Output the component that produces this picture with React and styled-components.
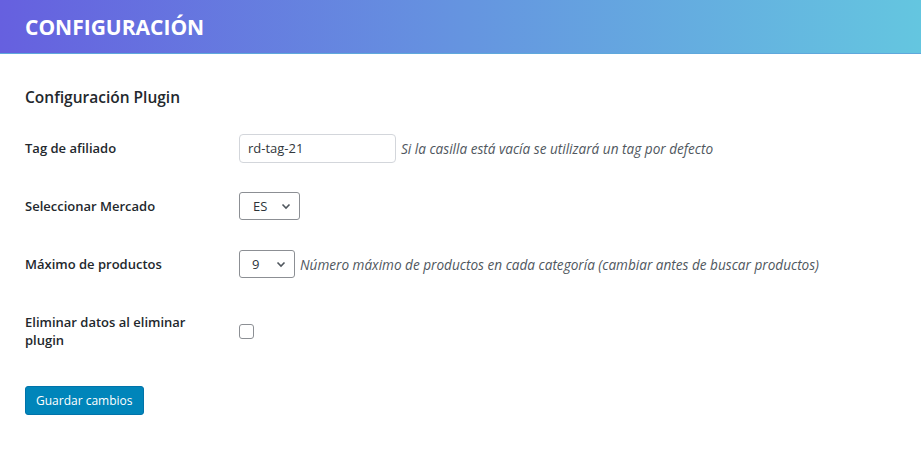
import React from "react"
import styled, { createGlobalStyle } from "styled-components"

const GlobalStyle = createGlobalStyle`
  body {
    margin: 0;
    background: #fff;
    font-family: 'Open Sans', 'Noto Sans', sans-serif;
    color: #23282d;
  }
`

const Header = styled.header`
  height: 53px;
  display: flex;
  align-items: center;
  padding: 0 25px;
  background: linear-gradient(90deg, #6660df 0%, #6594e0 50%, #64c6e0 100%);
  border-bottom: 1px solid #5fa8dc;
`

const Title = styled.h1`
  margin: 0;
  font-size: 21px;
  font-weight: 700;
  color: #fff;
`

const Content = styled.main`
  padding: 30px 25px 0;
`

const SectionTitle = styled.h2`
  margin: 0 0 9px;
  font-size: 15.5px;
  font-weight: 600;
  line-height: 26px;
`

const Form = styled.form`
  display: grid;
  grid-template-columns: 214px 1fr;
  align-items: center;
`

const Label = styled.label`
  font-size: 13px;
  font-weight: 600;
  line-height: 18px;
  padding: 20px 10px 20px 0;
  max-width: 190px;
`

const Field = styled.div`
  display: flex;
  align-items: center;
  gap: 5px;
`

const TextInput = styled.input`
  box-sizing: border-box;
  width: 157px;
  height: 29px;
  padding: 0 8px;
  border: 1px solid #d3d6db;
  border-radius: 4px;
  font-family: inherit;
  font-size: 13px;
  color: #32373c;
`

const SelectBox = styled.div`
  box-sizing: border-box;
  width: ${p => p.width}px;
  height: 28px;
  display: flex;
  align-items: center;
  justify-content: space-between;
  padding: 0 7px 0 ${p => p.padLeft}px;
  border: 1px solid #8c8f94;
  border-radius: 3px;
  font-size: 13px;
  color: #2c3338;
`

const Description = styled.span`
  font-size: 13.6px;
  font-style: italic;
  color: #50575e;
`

const Checkbox = styled.span`
  display: inline-block;
  box-sizing: border-box;
  width: 15px;
  height: 15px;
  border: 1px solid #8c8f94;
  border-radius: 3px;
  background: #fff;
`

const SaveButton = styled.button`
  margin-top: 17px;
  height: 29px;
  padding: 0 10px;
  border: 1px solid #0073aa;
  border-radius: 3px;
  background: #0085ba;
  color: #fff;
  font-family: inherit;
  font-size: 12px;
  cursor: pointer;
`

const Chevron = () => (
  <svg width="12" height="12" viewBox="0 0 12 12">
    <path d="M2.5 4.5 L6 8 L9.5 4.5" fill="none" stroke="#50575e" strokeWidth="1.6" />
  </svg>
)

export default function App () {
  return (
    <>
      <GlobalStyle />
      <Header>
        <Title>CONFIGURACIÓN</Title>
      </Header>
      <Content>
        <SectionTitle>Configuración Plugin</SectionTitle>
        <Form onSubmit={e => e.preventDefault()}>
          <Label>Tag de afiliado</Label>
          <Field>
            <TextInput defaultValue="rd-tag-21" />
            <Description>Si la casilla está vacía se utilizará un tag por defecto</Description>
          </Field>

          <Label>Seleccionar Mercado</Label>
          <Field>
            <SelectBox width={61} padLeft={13}>ES <Chevron /></SelectBox>
          </Field>

          <Label>Máximo de productos</Label>
          <Field>
            <SelectBox width={56} padLeft={12}>9 <Chevron /></SelectBox>
            <Description>Número máximo de productos en cada categoría (cambiar antes de buscar productos)</Description>
          </Field>

          <Label>Eliminar datos al eliminar plugin</Label>
          <Field>
            <Checkbox />
          </Field>
        </Form>
        <SaveButton type="submit">Guardar cambios</SaveButton>
      </Content>
    </>
  )
}
